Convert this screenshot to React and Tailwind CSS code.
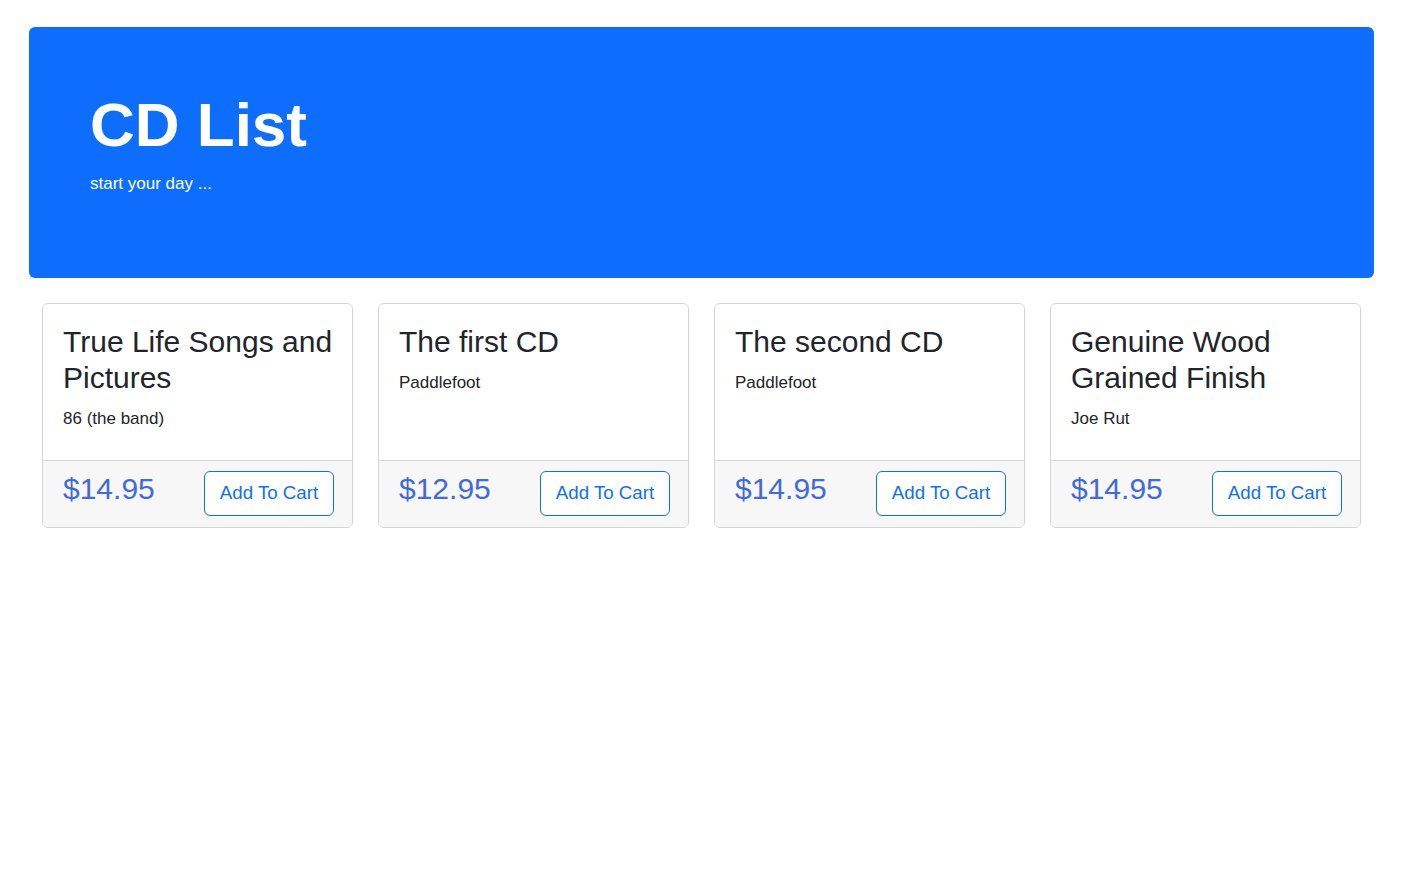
const cds = [
  { title: "True Life Songs and Pictures", artist: "86 (the band)", price: "$14.95" },
  { title: "The first CD", artist: "Paddlefoot", price: "$12.95" },
  { title: "The second CD", artist: "Paddlefoot", price: "$14.95" },
  { title: "Genuine Wood Grained Finish", artist: "Joe Rut", price: "$14.95" },
];

export default function App() {
  return (
    <div className="min-h-screen bg-white pl-[29px] pr-[32px] pt-[27px] text-[#212529] font-['Liberation_Sans',Arial,sans-serif]">
      {/* Jumbotron */}
      <div className="h-[251px] rounded-[6px] bg-[#0d6efd] px-[61px] pt-[62px] text-white">
        <h1 className="text-[62px] font-bold leading-[1.15]">CD List</h1>
        <p className="mt-[12px] text-[17px] leading-[24px]">start your day ...</p>
      </div>

      {/* Cards */}
      <div className="mt-[25px] grid grid-cols-4 gap-[25px] px-[13px]">
        {cds.map((cd) => (
          <div key={cd.title} className="flex h-[225px] flex-col rounded-[6px] border border-[#d5d5d5] overflow-hidden">
            <div className="flex-1 pl-[20px] pr-[12px] pt-[20px]">
              <h3 className="text-[30px] leading-[36px]">{cd.title}</h3>
              <p className="mt-[11px] text-[17px] leading-[24px]">{cd.artist}</p>
            </div>
            <div className="flex h-[67px] items-start justify-between border-t border-[#d5d5d5] bg-[#f7f7f7] pl-[20px] pr-[18px] pt-[9px]">
              <span className="text-[30px] leading-[38px] text-[#4169e1]">{cd.price}</span>
              <button className="mt-[1px] h-[45px] w-[130px] rounded-[6px] border border-[#0d6efd] bg-white text-[18.7px] text-[#0d6efd]">
                Add To Cart
              </button>
            </div>
          </div>
        ))}
      </div>
    </div>
  );
}
